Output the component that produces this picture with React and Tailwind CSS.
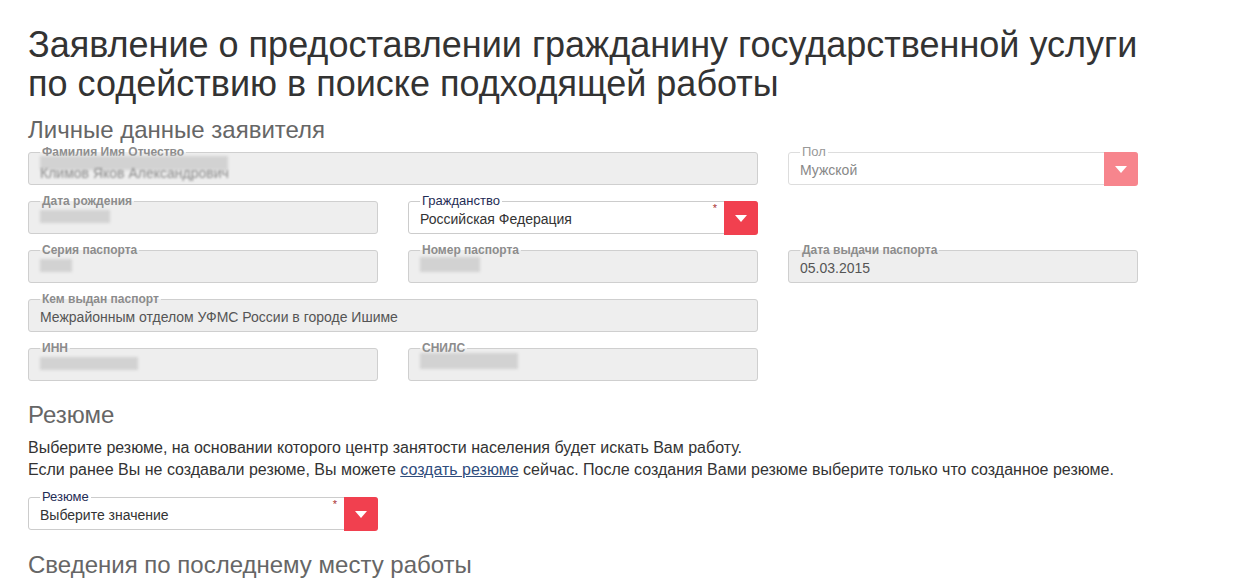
import React from "react";

const font = { fontFamily: '"Liberation Sans", Arial, sans-serif' };

function Blob({ className }) {
  return <span className={`absolute bg-[#d2d2d2] blur-[1.5px] ${className}`} />;
}

function Field({ label, value, className = "", children }) {
  return (
    <div
      className={`relative flex h-[33px] items-center rounded-[3px] border border-[#cfcfcf] bg-[#eee] px-[11px] pt-[3px] ${className}`}
    >
      <span className="absolute -top-[8px] left-[11px] bg-[linear-gradient(#fff_50%,#eee_50%)] px-[2px] text-[12px] font-bold leading-[14px] text-[#8c8c8c]">
        {label}
      </span>
      {value && <span className="text-[14px] text-[#555]">{value}</span>}
      {children}
    </div>
  );
}

function Select({ label, value, required, disabled, className = "" }) {
  return (
    <div
      className={`relative flex h-[33px] items-center rounded-[3px] border bg-white pl-[11px] pt-[3px] ${
        disabled ? "border-[#ddd]" : "border-[#ccc]"
      } ${className}`}
    >
      <span
        className={`absolute -top-[8px] left-[11px] bg-white px-[2px] text-[13px] leading-[14px] ${
          disabled ? "text-[#999]" : "text-[#1f2d55]"
        }`}
      >
        {label}
      </span>
      <span className={`flex-1 text-[14px] ${disabled ? "text-[#888]" : "text-[#333]"}`}>{value}</span>
      {required && (
        <span className="absolute right-[40px] top-[1px] text-[11px] leading-[11px] text-[#a33]">*</span>
      )}
      <span
        className={`-my-px -mr-px flex h-[34px] w-[34px] items-center justify-center self-start rounded-r-[3px] -mt-[4px] ${
          disabled ? "bg-[#f7858d]" : "bg-[#f1404f]"
        }`}
      >
        <svg width="12" height="7" viewBox="0 0 12 7">
          <path d="M0 0h12L6 7z" fill="#fff" />
        </svg>
      </span>
    </div>
  );
}

export default function App() {
  return (
    <main className="min-h-screen bg-white px-[28px] pt-[25px]" style={font}>
      <h1 className="text-[36px] leading-[39px] text-[#333]">
        Заявление о предоставлении гражданину государственной услуги
        <br />
        по содействию в поиске подходящей работы
      </h1>

      <h2 className="mt-[13px] text-[24px] leading-[28px] text-[#666]">Личные данные заявителя</h2>

      <div className="mt-[8px] grid grid-cols-[350px_350px_350px] gap-x-[30px] gap-y-[16px]">
        <Field label="Фамилия Имя Отчество" className="col-span-2">
          <Blob className="left-[11px] top-[3px] h-[14px] w-[188px]" />
          <span className="mt-[6px] text-[14px] text-[#888] blur-[1.2px]">Климов Яков Александрович</span>
        </Field>
        <Select label="Пол" value="Мужской" disabled />

        <Field label="Дата рождения">
          <Blob className="left-[11px] top-[8px] h-[13px] w-[70px]" />
        </Field>
        <Select label="Гражданство" value="Российская Федерация" required />

        <Field label="Серия паспорта" className="col-start-1">
          <Blob className="left-[11px] top-[8px] h-[13px] w-[32px]" />
        </Field>
        <Field label="Номер паспорта">
          <Blob className="left-[11px] top-[6px] h-[15px] w-[60px]" />
        </Field>
        <Field label="Дата выдачи паспорта" value="05.03.2015" />

        <Field
          label="Кем выдан паспорт"
          value="Межрайонным отделом УФМС России в городе Ишиме"
          className="col-span-2 col-start-1"
        />

        <Field label="ИНН" className="col-start-1">
          <Blob className="left-[11px] top-[8px] h-[13px] w-[98px]" />
        </Field>
        <Field label="СНИЛС">
          <Blob className="left-[11px] top-[4px] h-[16px] w-[98px]" />
        </Field>
      </div>

      <h2 className="mt-[20px] text-[24px] leading-[28px] text-[#666]">Резюме</h2>
      <p className="mt-[8px] text-[16px] leading-[22px] text-[#333]">
        Выберите резюме, на основании которого центр занятости населения будет искать Вам работу.
        <br />
        Если ранее Вы не создавали резюме, Вы можете{" "}
        <a href="#" className="text-[#2f4d7d] underline">
          создать резюме
        </a>{" "}
        сейчас. После создания Вами резюме выберите только что созданное резюме.
      </p>

      <div className="mt-[16px] w-[350px]">
        <Select label="Резюме" value="Выберите значение" required />
      </div>

      <h2 className="mt-[21px] text-[24px] leading-[28px] text-[#666]">Сведения по последнему месту работы</h2>
    </main>
  );
}
